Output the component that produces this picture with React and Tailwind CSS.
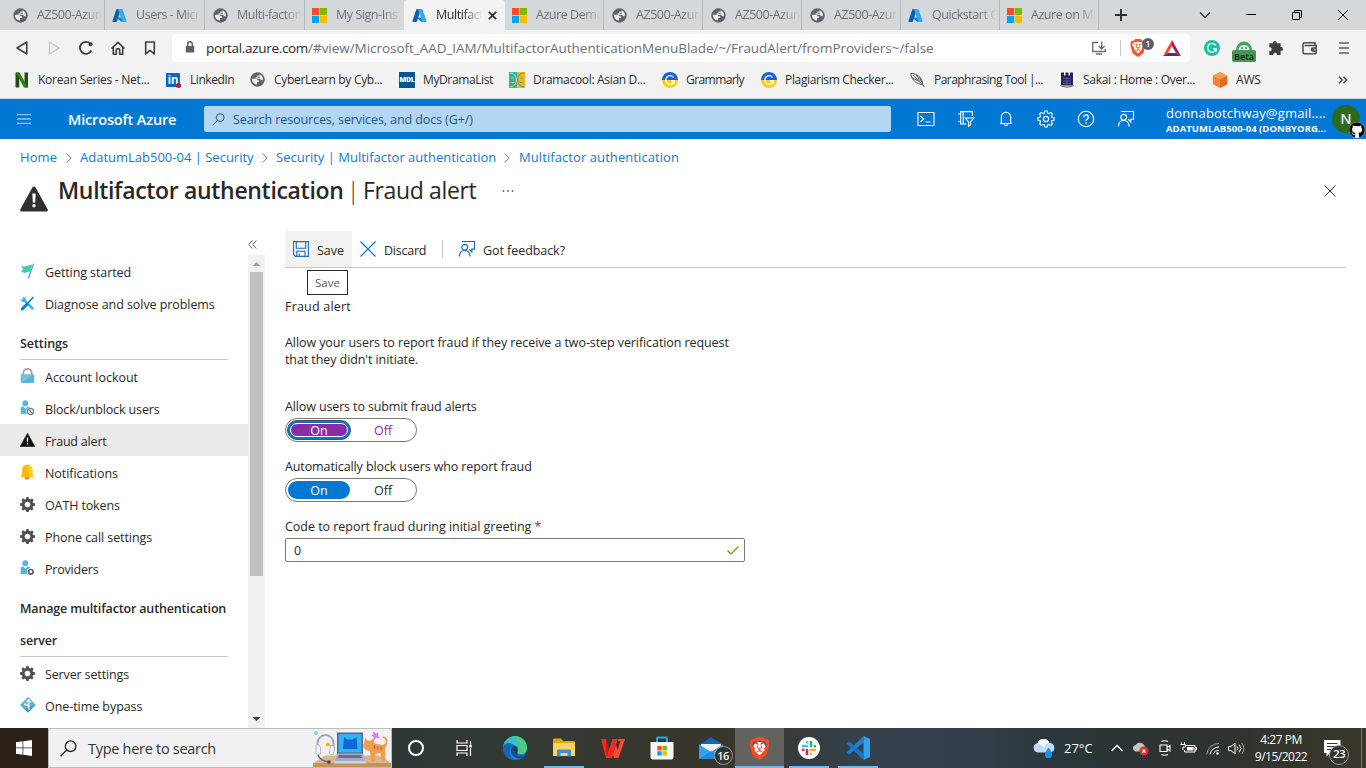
import React from 'react';
import { FaGithub, FaBrave } from 'react-icons/fa6';

/* ---------- shared icons ---------- */

const Globe = () => (
  <svg viewBox="0 0 16 16" className="size-[15px] shrink-0">
    <circle cx="8" cy="8" r="7.7" fill="#5f6368" />
    <path d="M1.900 7.200H6.300q1.700.1 1.700 1.700h1.700v1.800H7.500v2.700q-5.300-.7-5.600-6.200z" fill="#eceeef" />
    <path d="M10.300 2.300v1.500H7.700v1.700H6v1.700h4.500q1 .2 1 1.700h2.200q.6-4.800-3.400-6.600z" fill="#eceeef" />
    <path d="M8 5.500h2.500" stroke="#5f6368" strokeWidth="1.200" />
  </svg>
);

const AzureLogo = () => (
  <svg viewBox="0 0 16 16" className="size-[15px] shrink-0">
    <path d="M5.3 1h4.4L5.2 14.3a.8.8 0 0 1-.7.5H1.2a.7.7 0 0 1-.7-1L4.6 1.5A.8.8 0 0 1 5.3 1z" fill="#0f5ea8" />
    <path d="M11.9 10H5l4.4 4.5 3.8.3z" fill="#0078d4" />
    <path d="M11.3 1.5a.8.8 0 0 0-.7-.5H5.8c.3 0 .6.2.7.5l4.2 12.3a.7.7 0 0 1-.7 1h4.8a.7.7 0 0 0 .7-1z" fill="#36a9ec" />
  </svg>
);

const MsLogo = () => (
  <svg viewBox="0 0 15 15" className="size-[15px] shrink-0">
    <path fill="#f25022" d="M0 0h7.1v7.1H0z" />
    <path fill="#7fba00" d="M7.9 0H15v7.1H7.9z" />
    <path fill="#00a4ef" d="M0 7.9h7.1V15H0z" />
    <path fill="#ffb900" d="M7.9 7.9H15V15H7.9z" />
  </svg>
);

/* the glyph's lion is a cut-out, so a white disc lies under it */
const BraveLion = ({ size, disc, color }) => (
  <span className={'relative flex items-center justify-center ' + size}>
    <span className={'absolute rounded-full bg-white ' + disc} />
    <FaBrave className={'relative ' + size + ' ' + color} />
  </span>
);

/* ---------- browser tabs ---------- */

const tabs = [
  ['globe', 'AZ500-Azure', 'w-[105px] pl-[13px] border-r'],
  ['azure', 'Users - Micro', 'w-[100px] pl-[7px] border-r'],
  ['globe', 'Multi-factor', 'w-[100px] pl-[8px] border-r'],
  ['ms', 'My Sign-Ins', 'w-[99px] pl-[7px]'],
  ['azure', 'Multifacto', 'active'],
  ['ms', 'Azure Demo', 'w-[99px] pl-[7px] border-r'],
  ['globe', 'AZ500-Azure', 'w-[99px] pl-[8px] border-r'],
  ['globe', 'AZ500-Azure', 'w-[99px] pl-[8px] border-r'],
  ['globe', 'AZ500-Azure', 'w-[99px] pl-[8px] border-r'],
  ['azure', 'Quickstart Ce', 'w-[99px] pl-[7px] border-r'],
  ['ms', 'Azure on Mic', 'w-[99px] pl-[7px] border-r'],
];
const tabIcon = { globe: <Globe />, azure: <AzureLogo />, ms: <MsLogo /> };

function TabBar() {
  return (
    <div className="flex h-[30px] shrink-0 bg-[#d4d8db] text-[12.5px] tracking-[-0.45px] text-[#6c7074]">
      {tabs.map(([icon, label, cls], i) =>
        cls === 'active' ? (
          <div key={i} className="flex w-[101px] items-center rounded-t-[4px] bg-[#f2f2f2] pl-[8px] text-[#2b2d30]">
            {tabIcon[icon]}
            <span className="ml-[9px] w-[46px] overflow-hidden whitespace-nowrap pt-px [mask-image:linear-gradient(to_right,black_60%,transparent)]">{label}</span>
            <svg viewBox="0 0 10 10" className="ml-[6px] size-[9px]"><path d="M1 1l8 8M9 1L1 9" stroke="#2b2d30" strokeWidth="1.8" /></svg>
          </div>
        ) : (
          <div key={i} className={'flex items-center border-[#b5b9bc] ' + cls}>
            {tabIcon[icon]}
            <span className="ml-[9px] w-[65px] overflow-hidden whitespace-nowrap pt-px [mask-image:linear-gradient(to_right,black_72%,transparent)]">{label}</span>
          </div>
        )
      )}
      <div className="flex flex-1 items-center">
        <svg viewBox="0 0 12 12" className="ml-[16px] size-[12px]"><path d="M6 0v12M0 6h12" stroke="#2b2d30" strokeWidth="1.9" /></svg>
        <div className="ml-auto flex items-center text-black">
          <span className="flex w-[46px] justify-center"><svg viewBox="0 0 12 12" className="size-[12px]"><path d="M1 3.500L6 8.500l5-5" fill="none" stroke="#222" strokeWidth="1.100" /></svg></span>
          <span className="flex w-[46px] justify-center"><svg viewBox="0 0 12 12" className="size-[12px]"><path d="M1 5.500h10" stroke="#000" /></svg></span>
          <span className="flex w-[46px] justify-center"><svg viewBox="0 0 12 12" className="size-[12px]"><path d="M1.500 3.500h7v7h-7zM3.500 3.500v-2h7v7h-2" fill="none" stroke="#000" /></svg></span>
          <span className="flex w-[46px] justify-center"><svg viewBox="0 0 12 12" className="size-[12px]"><path d="M1 1l10 10M11 1L1 11" stroke="#000" /></svg></span>
        </div>
      </div>
    </div>
  );
}

/* ---------- address bar ---------- */

const NavIcon = ({ children }) => (
  <span className="flex w-[32px] justify-center">
    <svg viewBox="0 0 16 16" className="size-[16px]" fill="none" stroke="#3b3e42" strokeWidth="1.6">{children}</svg>
  </span>
);

function AddressBar() {
  return (
    <div className="flex h-[36px] shrink-0 items-center bg-[#f2f2f2] pl-[6px]">
      <NavIcon><path d="M12.800 2v12L3 8z" strokeLinejoin="round" /></NavIcon>
      <NavIcon><path d="M3.500 2v12L13 8z" strokeLinejoin="round" stroke="#c3c5c7" strokeWidth="1.3" /></NavIcon>
      <NavIcon><path d="M13.300 10.500A6 6 0 1 1 12.600 4" strokeWidth="1.800" /><circle cx="12.600" cy="4.300" r="2" fill="#3b3e42" stroke="none" /></NavIcon>
      <NavIcon><path d="M1.500 8.500L8 2.300l6.500 6.200M3.300 7.500v6.700h3V10.300a1.700 1.700 0 0 1 3.400 0v3.900h3V7.500" strokeLinejoin="round" /></NavIcon>
      <NavIcon><path d="M3.700 2h8.600v12L8 10.300 3.700 14z" strokeLinejoin="round" /></NavIcon>
      <div className="ml-[6px] flex h-[28px] w-[1018px] items-center rounded-[4px] bg-white text-[13.5px] text-[#6b6f73]">
        <svg viewBox="0 0 10 12" className="ml-[13px] mb-[2px] h-[12px] w-[10px]">
          <path d="M.8 5h8.400v6.500H.800z" fill="#5a5e62" />
          <path d="M2.700 5.500V3a2.300 2.300 0 0 1 4.600 0v2.500" fill="none" stroke="#5a5e62" strokeWidth="1.500" />
        </svg>
        <span className="ml-[11px] tracking-[-0.31px] text-[#27292c]">portal.azure.com</span>
        <span className="tracking-[-0.04px]">/#view/Microsoft_AAD_IAM/MultifactorAuthenticationMenuBlade/~/FraudAlert/fromProviders~/false</span>
        <svg viewBox="0 0 16 16" className="ml-auto mr-[3px] size-[16px]" fill="none" stroke="#6a6e72" strokeWidth="1.400">
          <path d="M7 2.500H1.700v9h12.600V9M5 14h6M10.700 1.500v7M7.800 6l2.900 2.900L13.600 6" />
        </svg>
        <span className="ml-[10px] h-[16px] w-px bg-[#c8cacc]" />
        <span className="relative ml-[8px] mr-px flex size-[18px] items-center justify-center">
          <BraveLion size="size-[18px]" disc="size-[10px]" color="text-[#fb542b]" />
          <span className="absolute left-[13px] -top-[1px] flex size-[12px] items-center justify-center rounded-full bg-[#5b6170] text-[8.5px] font-semibold text-white">1</span>
        </span>
        <svg viewBox="0 0 18 16" className="ml-[15px] mr-[9px] h-[16px] w-[18px]">
          <path d="M9 0L0 16l5-3L9 6z" fill="#ff4724" /><path d="M0 16h18l-5-3H5z" fill="#5a2a8a" /><path d="M18 16L9 0v6l4 7z" fill="#9e1f63" />
        </svg>
      </div>
      <svg viewBox="0 0 16 16" className="ml-[14px] size-[16px]">
        <circle cx="8" cy="8" r="8" fill="#15c39a" />
        <path d="M11.800 5.500A4.400 4.400 0 1 0 12.300 9H8.800M12.300 8.200v3.300" fill="none" stroke="#fff" strokeWidth="1.400" />
      </svg>
      <span className="ml-[12px] flex w-[24px] flex-col items-center pt-[6px]">
        <svg viewBox="0 0 16 10" className="h-[10px] w-[16px]">
          <path d="M0 10a8 8.500 0 0 1 16 0z" fill="#46a35c" /><path d="M2.500 10a5.500 5 0 0 1 11 0z" fill="#e6f5e9" /><circle cx="6" cy="8" r=".9" fill="#2d7a40" /><circle cx="10" cy="8" r=".9" fill="#2d7a40" />
        </svg>
        <span className="flex h-[12px] w-[24px] items-center justify-center rounded-[2px] bg-[#479457] text-[9px] font-semibold leading-none text-[#10240f]">Beta</span>
      </span>
      <svg viewBox="0 0 16 16" className="ml-[12px] size-[16px]">
        <path d="M6.800 1a1.900 1.900 0 0 1 1.900 2.200h3.900v3.900a1.900 1.900 0 1 1 0 3.700v4.200H9a1.900 1.900 0 1 0-3.700 0H1.300v-4a1.900 1.900 0 1 0 0-3.700V3.200H5A1.900 1.900 0 0 1 6.800 1z" fill="#3b3e42" />
      </svg>
      <svg viewBox="0 0 16 16" className="ml-[18px] size-[16px]" fill="none" stroke="#4b4e52" strokeWidth="1.500">
        <path d="M13 5V2.700H2.500A1.500 1.500 0 0 0 1 4.200v8a1.500 1.500 0 0 0 1.500 1.500h10.700A1 1 0 0 0 14.200 12.700V5.500H2.500" /><path d="M15 8h-4a1.600 1.600 0 0 0 0 3.200h4" /><circle cx="11.300" cy="9.600" r=".5" fill="#4b4e52" />
      </svg>
      <svg viewBox="0 0 12 12" className="ml-[20px] size-[12px]"><path d="M1 1h10M1 6h10M1 11h10" stroke="#5d6064" strokeWidth="1.600" /></svg>
    </div>
  );
}

/* ---------- bookmarks ---------- */

const GrammarlyBadge = () => (
  <svg viewBox="0 0 16 16" className="size-[16px] shrink-0">
    <path d="M0 8a8 8 0 0 1 16 0z" fill="#1664d0" /><path d="M0 8a8 8 0 0 0 16 0z" fill="#fbcf14" />
    <path d="M11.500 5.300A4.300 4.300 0 1 0 12.300 9H9M12.300 8.400v3" fill="none" stroke="#fff" strokeWidth="1.300" />
  </svg>
);

const bookmarks = [
  ['Korean Series - Net...', 'w-[152px]', 'tracking-[-0.24px]',
    <svg viewBox="0 0 16 16" className="size-[16px]"><path d="M1.500.5h3.700v15H1.500zM10.500.5h3.500v15h-3.500z" fill="#1f4d12" /><path d="M1.500.5h4L14 15.500h-4z" fill="#2f7d1b" /></svg>],
  ['LinkedIn', 'w-[84px]', 'tracking-[-0.45px]',
    <span className="relative flex size-[14px] items-center justify-center rounded-[1px] bg-[#0a66c2] font-['Liberation_Sans'] text-[12px] font-bold leading-none tracking-normal text-white">in<i className="absolute -right-[1px] -bottom-[1px] size-[5px] rounded-full bg-[#d11124]" /></span>],
  ['CyberLearn by Cyb...', 'w-[149px]', 'tracking-[-0.3px]', <Globe />],
  ['MyDramaList', 'w-[110px]', 'tracking-[-0.38px]',
    <span className="flex size-[16px] items-center justify-center bg-[#00568c] text-[7px] font-extrabold leading-none tracking-[-0.3px] text-white">MDL</span>],
  ['Dramacool: Asian D...', 'w-[153px]', 'tracking-[-0.32px]',
    <svg viewBox="0 0 16 16" className="size-[16px]"><path fill="#2fb5a8" d="M0 0h8v16H0z" /><path fill="#f5b324" d="M8 0h8v16H8z" /><path d="M1 1q6 0 6.500 7-.5 6.500-6.500 7M2.500 6h2M2.500 10.500q2 .5 3-.5" fill="none" stroke="#f5c95a" /><path d="M15 1q-6 0-6.500 7 .5 6.500 6.500 7M13.500 6h-2M13.500 10.500q-2 .5-3-.5" fill="none" stroke="#2fa598" /></svg>],
  ['Grammarly', 'w-[99px]', 'tracking-[-0.57px]', <GrammarlyBadge />],
  ['Plagiarism Checker...', 'w-[149px]', 'tracking-[-0.34px]', <GrammarlyBadge />],
  ['Paraphrasing Tool |...', 'w-[149px]', 'tracking-[-0.54px]',
    <svg viewBox="0 0 16 16" className="size-[16px]" fill="none" stroke="#55585b"><path d="M.8 1.500c6-.5 11.500 4 12 11C7 12.500 1.500 8 .8 1.500zM3 3l11.500 12M6.500 3l3 5.500M9.500 5l2 5M2.500 6l6 3" /></svg>],
  ['Sakai : Home : Over...', 'w-[153px]', 'tracking-[-0.28px]',
    <svg viewBox="0 0 16 16" className="size-[16px]"><path d="M0 0h16v16H0z" fill="#fbfbfb" /><path d="M2 .5h3v3h1.500v-3h3v3H11v-3h3v13H2z" fill="#23235f" /><path d="M4 6.500h8M4 9h8M4 11.500h8M8 5v8" stroke="#6a6ba0" strokeWidth=".7" /><path d="M1 13.500q7 3 14 0" fill="none" stroke="#9c8457" strokeWidth="1.300" /></svg>],
  ['AWS', 'w-[60px]', 'tracking-[-0.2px]',
    <svg viewBox="0 0 16 16" className="size-[16px]"><path d="M8 0l7.200 3.800v8.400L8 16 .800 12.200V3.800z" fill="#f58536" /><path d="M8 7.600l7.200-3.800v8.400L8 16z" fill="#ea6a20" /><path d="M8 0l7.200 3.800L8 7.600.800 3.800z" fill="#fa9c50" /></svg>],
];

function Bookmarks() {
  return (
    <div className="flex h-[33px] shrink-0 items-center border-b border-[#cfd2d4] bg-[#f2f2f2] pb-[5px] pl-[14px] text-[12px] text-[#2c2e31]">
      {bookmarks.map(([label, w, tr, icon]) => (
        <div key={label} className={'flex shrink-0 items-center ' + w}>
          <span className="flex w-[24px] shrink-0">{icon}</span>
          <span className={'whitespace-nowrap ' + tr}>{label}</span>
        </div>
      ))}
      <svg viewBox="0 0 10 8" className="ml-auto mr-[18px] h-[8px] w-[10px]" fill="none" stroke="#3b3e42" strokeWidth="1.500"><path d="M1 .8L4.200 4 1 7.200M5.500.8L8.700 4 5.500 7.200" /></svg>
    </div>
  );
}

/* ---------- Azure header ---------- */

const HeaderIcon = ({ children }) => (
  <span className="flex w-[40px] justify-center">
    <svg viewBox="0 0 18 18" className="size-[18px]" fill="none" stroke="#fff" strokeWidth="1.100">{children}</svg>
  </span>
);

const FeedbackPath = () => (
  <path d="M4.500 2V1.500h12v7.700h-2.700v2.800l-2.600-2.800M9.600 7.300A2.900 2.900 0 1 1 3.800 7.300a2.900 2.900 0 0 1 5.800 0zM1.500 16.500c0-3.600 2-6 5.200-6s5.300 2.400 5.300 6" />
);

function AzureHeader() {
  return (
    <header className="flex h-[40px] shrink-0 items-center bg-[#0078d4] text-white">
      <svg viewBox="0 0 14 10" className="ml-[17px] h-[10px] w-[14px]"><path d="M0 .7h14M0 5h14M0 9.300h14" stroke="#8fc3ee" strokeWidth="1.300" /></svg>
      <span className="ml-[37px] w-[136px] pt-px text-[14.5px] font-semibold tracking-[-0.16px] whitespace-nowrap">Microsoft Azure</span>
      <div className="flex h-[26px] w-[687px] items-center rounded-[2px] bg-[#b3d7f2] text-[12.5px] tracking-[-0.09px] text-[#1a5790]">
        <svg viewBox="0 0 13 13" className="ml-[8px] size-[13px]" fill="none" stroke="#1f5c99"><circle cx="8.200" cy="4.600" r="3.900" /><path d="M5.300 7.500L.6 12.400" /></svg>
        <span className="ml-[8px] pt-[2px]">Search resources, services, and docs (G+/)</span>
      </div>
      <div className="ml-[15px] flex">
        <HeaderIcon><path d="M1 2.500h16v13H1zM3.500 6l3.200 3-3.200 3M8.500 12h5" /></HeaderIcon>
        <HeaderIcon><path d="M9.500 14H3.700V1.600h11.600V6M3.700 4H1.200M3.700 11.500H1.200M6.200 1.600V14M8.300 8h8.500l-3.300 4v3l-2 1.500V12z" /></HeaderIcon>
        <HeaderIcon><path d="M3 13.500h12M4.300 13.500V7a4.700 4.700 0 0 1 9.400 0v6.500M7.200 13.800a1.800 1.800 0 0 0 3.600 0" /></HeaderIcon>
        <HeaderIcon>
          <path d="M7.800 1h2.400l.4 2 1.400.6 1.700-1.200 1.800 1.800L14.400 6l.6 1.300 2 .4v2.500l-2 .4-.6 1.400 1.100 1.700-1.800 1.800-1.700-1.100-1.400.6-.4 2H7.800l-.4-2-1.400-.6-1.700 1.100-1.800-1.800L3.600 12 3 10.600l-2-.4V7.700l2-.4L3.600 6 2.500 4.200l1.800-1.800L6 3.600 7.400 3z" />
          <circle cx="9" cy="9" r="2.600" />
        </HeaderIcon>
        <HeaderIcon><circle cx="9" cy="9" r="7.700" /><path d="M6.700 7.200a2.300 2.300 0 1 1 3.500 1.900c-.9.600-1.200 1-1.200 2M9 12.200v1.500" strokeWidth="1.400" /></HeaderIcon>
        <HeaderIcon><FeedbackPath /></HeaderIcon>
      </div>
      <div className="ml-[20px] flex w-[166px] flex-col pt-[2px] whitespace-nowrap">
        <span className="text-[13px] leading-[16px] tracking-[0.19px]">donnabotchway@gmail....</span>
        <span className="text-[9.5px] font-bold leading-[15px] tracking-[0.02px]">ADATUMLAB500-04 (DONBYORG...</span>
      </div>
      <span className="relative flex size-[28px] items-center justify-center rounded-full bg-[#2c6a24] text-[14.5px] font-semibold text-[#e6f0e4]">
        N
        <span className="absolute left-[17px] top-[17px] flex size-[16px] items-center justify-center rounded-full bg-white text-black"><FaGithub className="size-[16px]" /></span>
      </span>
    </header>
  );
}

/* ---------- page heading ---------- */

const Crumb = () => <svg viewBox="0 0 6 10" className="h-[10px] w-[6px]" fill="none" stroke="#7a7876"><path d="M.7.5L5.200 5 .7 9.500" /></svg>;

function Heading() {
  return (
    <div className="shrink-0">
      <nav className="flex h-[36px] items-center pt-[2px] pl-[20px] text-[13px] whitespace-nowrap text-[#0f7bd4]">
        <span className="w-[46px] tracking-[0.1px]">Home</span><Crumb />
        <span className="ml-[8px] w-[182px]">AdatumLab500-04 | Security</span><Crumb />
        <span className="ml-[8px] w-[228px]">Security | Multifactor authentication</span><Crumb />
        <span className="ml-[9px] tracking-[0.08px]">Multifactor authentication</span>
      </nav>
      <div className="flex h-[56px] pl-[20px] text-[#292827]">
        <svg viewBox="0 0 28 26" className="mt-[11px] h-[26px] w-[28px]">
          <path d="M14 0.500q1 0 1.600 1L27.500 23q1 2.600-1.500 2.600H2Q-.5 25.600.5 23L12.400 1.500q.6-1 1.600-1z" fill="#32302f" />
          <path d="M12.300 7.500h3.400l-.5 9h-2.400z" fill="#fff" /><circle cx="14" cy="19.800" r="1.700" fill="#fff" />
        </svg>
        <h1 className="ml-[10px] flex text-[23px] leading-[31px] whitespace-nowrap">
          <span className="w-[289px] font-semibold tracking-[-0.32px]">Multifactor authentication</span>
          <span className="w-[16px] font-light">|</span>
          <span className="tracking-[-0.36px]">Fraud alert</span>
        </h1>
        <svg viewBox="0 0 12 2" className="ml-[26px] mt-[15px] h-[2px] w-[12px]" fill="#605e5c"><circle cx="1.500" cy="1" r=".9" /><circle cx="6" cy="1" r=".9" /><circle cx="10.500" cy="1" r=".9" /></svg>
        <svg viewBox="0 0 12 12" className="ml-auto mr-[30px] mt-[10px] size-[12px]"><path d="M.5.5l11 11M11.500.5l-11 11" stroke="#323130" /></svg>
      </div>
    </div>
  );
}

/* ---------- side menu ---------- */

const Gear = () => (
  <svg viewBox="0 0 16 16" className="size-[15px]">
    <path fillRule="evenodd" fill="#4f4f4f" d="M6.800 0h2.400l.4 2 1.400.6 1.700-1.200 1.800 1.800L13.400 5l.6 1.300 2 .4v2.500l-2 .4-.6 1.400 1.100 1.700-1.800 1.800-1.700-1.100-1.400.6-.4 2H6.800l-.4-2-1.400-.6-1.700 1.100-1.800-1.800L2.600 11 2 9.600l-2-.4V6.700l2-.4L2.600 5 1.500 3.200l1.800-1.800L5 2.600 6.400 2zM8 5a3 3 0 1 0 0 6 3 3 0 0 0 0-6z" />
  </svg>
);
const Person = ({ children }) => (
  <svg viewBox="0 0 15 16" className="h-[16px] w-[15px]">
    <circle cx="5.300" cy="3.200" r="2.900" fill="#59b4d9" /><path d="M.7 14V8.600a2 2 0 0 1 2-2h1L5.500 9l1.800-2.400h1a2 2 0 0 1 2 2V14z" fill="#59b4d9" />
    {children}
  </svg>
);
const icons = {
  flag: <svg viewBox="0 0 15 16" className="h-[16px] w-[15px]"><path d="M13.300.5l.8.300L9 15.500l-1.200-.3z" fill="#2f8fdc" /><path d="M1 2.500q3 1.500 5.500.5t6-1.500L10.300 9q-2-.5-4 .5T2.500 9L.7 9.500 3 6z" fill="#3cd0ae" /></svg>,
  tools: <svg viewBox="0 0 15 15" className="size-[15px]"><path d="M3.500 3.500l9 9" stroke="#36b8e6" strokeWidth="2.500" strokeLinecap="round" /><path d="M2.800.8l.6 2.200-.8.800L.6 3.300a3.200 3.200 0 0 0 4.800 2.500A3.200 3.200 0 0 0 2.800.8z" fill="#36b8e6" /><path d="M13.500 1L8 7" stroke="#0f7bc4" strokeWidth="1.500" /><path d="M7 8.200l-4.800 4.800" stroke="#1479bd" strokeWidth="3" strokeLinecap="round" /></svg>,
  lock: <svg viewBox="0 0 15 16" className="h-[16px] w-[15px]"><path d="M3.300 8V5a4.200 4.200 0 0 1 8.400 0v3" fill="none" stroke="#a0a1a2" strokeWidth="1.800" /><path d="M.8 6.500h13.400V14q0 1-1 1H1.800q-1 0-1-1z" fill="#59b4d9" /><path d="M.8 6.500h12L1.500 15q-.7-.2-.7-1z" fill="#74c0e0" /></svg>,
  block: <Person><circle cx="10.500" cy="11.500" r="4.300" fill="#fff" /><circle cx="10.500" cy="11.500" r="3.200" fill="#e6e6e6" stroke="#7a7a7a" strokeWidth="1.200" /><path d="M8.300 9.300l4.400 4.400" stroke="#7a7a7a" strokeWidth="1.200" /></Person>,
  alert: <svg viewBox="0 0 15 14" className="h-[14px] w-[15px]"><path d="M7.500.3L14.800 13.500H.2z" fill="#111" stroke="#111" strokeWidth=".6" strokeLinejoin="round" /><path d="M6.800 4.500h1.400l-.2 4.500h-1zM6.900 10.200h1.200v1.300H6.900z" fill="#fff" /></svg>,
  bell: <svg viewBox="0 0 15 16" className="h-[16px] w-[15px]"><circle cx="7" cy="13.200" r="2.500" fill="#f78d1e" /><path d="M2 11V5.800a5.200 5.200 0 0 1 10.400 0V11l1.400 1.300v1H.7v-1z" fill="#fdb813" /><path d="M7.200.6a5.200 5.200 0 0 1 5.200 5.200V11l1.400 1.300v1H10z" fill="#ffd01c" /></svg>,
  gear: <Gear />,
  provider: <Person><circle cx="10.800" cy="11.800" r="3.900" fill="#fff" /><circle cx="10.800" cy="11.800" r="2.300" fill="#fff" stroke="#5b5b5b" strokeWidth="1.700" /></Person>,
  bypass: <svg viewBox="0 0 16 16" className="size-[16px]"><path d="M8 .3L15.700 8 8 15.700.3 8z" fill="#3999c6" /><path d="M8 .3L15.700 8 8 11 4 12 .3 8z" fill="#5fb0d6" /><path d="M8.700 12.500V5M8.700 8.700Q5 8 4.700 6.500M6.800 5.200L8.700 3l2 2.200" fill="none" stroke="#fff" strokeWidth="1.500" /></svg>,
};

const MenuItem = ({ icon, label, tr, active }) => (
  <li className={'flex h-[32px] items-center pl-[20px] ' + (active ? 'bg-[#edebe9]' : '')}>
    <span className="flex w-[25px]">{icons[icon]}</span>
    <span className={'pt-[3px] whitespace-nowrap ' + tr}>{label}</span>
  </li>
);

function SideMenu() {
  return (
    <aside className="flex w-[265px] shrink-0 flex-col">
      <div className="flex h-[24px] items-center justify-end pt-[2px] pr-[8px]">
        <svg viewBox="0 0 9 9" className="size-[9px]" fill="none" stroke="#605e5c"><path d="M4.300.5L.7 4.500l3.600 4M8.300.5L4.700 4.500l3.600 4" /></svg>
      </div>
      <div className="flex flex-1">
        <div className="w-[248px] text-[12.5px] leading-[19px] text-[#292827]">
          <ul>
            <MenuItem icon="flag" label="Getting started" tr="tracking-[-0.1px]" />
            <MenuItem icon="tools" label="Diagnose and solve problems" tr="tracking-[-0.07px]" />
          </ul>
          <h2 className="mt-[8px] mr-[20px] ml-[20px] h-[33px] border-b border-[#c8c6c4] pt-px font-semibold leading-[32px] tracking-[-0.05px]">Settings</h2>
          <ul>
            <MenuItem icon="lock" label="Account lockout" tr="tracking-[-0.02px]" />
            <MenuItem icon="block" label="Block/unblock users" tr="tracking-[-0.13px]" />
            <MenuItem icon="alert" label="Fraud alert" tr="tracking-[-0.2px]" active />
            <MenuItem icon="bell" label="Notifications" tr="tracking-[-0.05px]" />
            <MenuItem icon="gear" label="OATH tokens" tr="tracking-[-0.12px]" />
            <MenuItem icon="gear" label="Phone call settings" tr="tracking-[-0.08px]" />
            <MenuItem icon="provider" label="Providers" tr="tracking-[-0.2px]" />
          </ul>
          <h2 className="mt-[8px] mr-[20px] ml-[20px] h-[65px] border-b border-[#c8c6c4] pt-px font-semibold leading-[32px] tracking-[-0.16px]">Manage multifactor authentication server</h2>
          <ul>
            <MenuItem icon="gear" label="Server settings" tr="tracking-[-0.14px]" />
            <MenuItem icon="bypass" label="One-time bypass" tr="tracking-[-0.06px]" />
          </ul>
        </div>
        <div className="flex w-[17px] flex-col items-center bg-[#f1f1f1]">
          <svg viewBox="0 0 17 17" className="size-[17px]"><path d="M4.500 11L8.500 7l4 4z" fill="#a3a3a3" /></svg>
          <div className="h-[304px] w-[13px] bg-[#c1c1c1]" />
          <svg viewBox="0 0 17 17" className="mt-auto size-[17px]"><path d="M4.500 6L8.500 10l4-4z" fill="#404040" /></svg>
        </div>
      </div>
    </aside>
  );
}

/* ---------- blade content ---------- */

function CommandBar() {
  return (
    <div className="flex h-[37px] border-b border-[#c8c6c4]">
      <div className="relative flex w-[67px] items-center bg-[#f3f2f1] pl-[8px]">
        <svg viewBox="0 0 16 16" className="size-[16px]" fill="none" stroke="#1a6fc4" strokeWidth="1.100">
          <path d="M.6.600h14.800v14.800H2.500L.6 13.500zM3.300.6v6.700h9.400V.6M3.700 15.400v-5.200h8.300v5.200M6.300 15.400v-3" />
        </svg>
        <span className="ml-[8px] mt-[2px]">Save</span>
        <span className="absolute left-[22px] top-[39px] flex h-[25px] w-[41px] items-center justify-center border border-[#2b2b2b] bg-white text-[11.5px] text-[#575757]">Save</span>
      </div>
      <div className="flex w-[90px] items-center pl-[8px]">
        <svg viewBox="0 0 16 16" className="size-[16px]"><path d="M.5.500l15 15M15.500.5l-15 15" stroke="#0078d4" strokeWidth="1.200" /></svg>
        <span className="ml-[8px] mt-[2px] tracking-[-0.24px]">Discard</span>
      </div>
      <span className="mt-[9px] h-[18px] w-px bg-[#c8c6c4]" />
      <div className="flex items-center pl-[15px]">
        <svg viewBox="0 0 18 18" className="size-[18px]" fill="none" stroke="#0f6fc6" strokeWidth="1.200"><FeedbackPath /></svg>
        <span className="ml-[7px] mt-[2px] tracking-[-0.06px]">Got feedback?</span>
      </div>
    </div>
  );
}

function Blade() {
  return (
    <main className="ml-[20px] w-[1061px] text-[12.5px] leading-[17px] whitespace-nowrap text-[#292827]">
      <CommandBar />
      <h3 className="mt-[30px] tracking-[0.2px]">Fraud alert</h3>
      <p className="mt-[19px] tracking-[-0.085px]">
        Allow your users to report fraud if they receive a two-step verification request<br />that they didn&apos;t initiate.
      </p>
      <div className="mt-[30px] tracking-[-0.13px]">Allow users to submit fraud alerts</div>
      <div className="mt-[3px] flex h-[24px] w-[132px] items-center rounded-full border border-[#7a7876] pl-px">
        <span className="flex h-[20px] w-[64px] rounded-full border border-[#505050] bg-[#0078d4] p-[2px]">
          <span className="flex flex-1 items-center justify-center rounded-full border border-white bg-[#8a2da5] text-white">On</span>
        </span>
        <span className="w-[64px] text-center text-[#8a2da5]">Off</span>
      </div>
      <div className="mt-[16px] tracking-[-0.11px]">Automatically block users who report fraud</div>
      <div className="mt-[3px] flex h-[24px] w-[132px] items-center rounded-full border border-[#7a7876] pl-[2px]">
        <span className="flex h-[18px] w-[62px] items-center justify-center rounded-full bg-[#0078d4] text-white">On</span>
        <span className="w-[66px] text-center">Off</span>
      </div>
      <div className="mt-[16px] tracking-[-0.03px]">Code to report fraud during initial greeting <span className="text-[#a4262c]">*</span></div>
      <div className="mt-[3px] flex h-[24px] w-[460px] items-center justify-between rounded-[2px] border border-[#7a7876] pr-[5px] pl-[8px]">
        <span>0</span>
        <svg viewBox="0 0 12 9" className="h-[9px] w-[12px]" fill="none" stroke="#57a300" strokeWidth="1.200"><path d="M.5 4.500l3.500 3.500L11.500.5" /></svg>
      </div>
    </main>
  );
}

/* ---------- taskbar ---------- */

const Cell = ({ children }) => <span className="flex h-full w-[49px] items-center justify-center">{children}</span>;
const Running = ({ children, cls = '', bar = 'w-[40px]' }) => (
  <span className={'flex h-full w-[49px] flex-col items-center ' + cls}>
    <span className="flex h-[38px] items-center pt-[2px]">{children}</span>
    <span className={'h-[2px] bg-[#76b9ed] ' + bar} />
  </span>
);

const SearchArt = () => (
  <svg viewBox="0 0 78 38" className="h-[38px] w-[78px]">
    <path d="M12 26.500h56l10 8H0z" fill="#dcb58a" /><path d="M0 34h78v4H0z" fill="#c1935f" />
    <circle cx="3" cy="4" r="2" fill="#6fd9ee" />
    <path d="M4.500 20V14a8 8 0 0 1 16 0v6" fill="none" stroke="#a3a7ba" strokeWidth="2" />
    <path d="M3 16q4-1 4.500 3v6q-3 3-4.500-1zM17.500 16q4 0 4 3.500l-1 6q-3 1-4-1z" fill="#f3f3f8" stroke="#9c9fb2" strokeWidth=".7" />
    <path d="M5 26q2 6 11 7" fill="none" stroke="#686b80" strokeWidth="1.500" /><circle cx="16" cy="33" r="1.800" fill="#444657" />
    <circle cx="14.800" cy="15.500" r="2" fill="#f9ae18" />
    <path d="M24 3.500h26v22H24z" fill="#5c648b" /><path d="M25.500 5h23v18.500h-23z" fill="#35b2f2" />
    <path d="M31 8l3.500 2.500h5L43.500 8l1 12H30z" fill="#0c68d6" />
    <path d="M24 24.500h26l2 8H22z" fill="#a7abc1" /><path d="M26 26h22l1 3H25z" fill="#676c89" /><path d="M21.500 32h31v2.500h-31z" fill="#d3d5e2" />
    <path d="M60 2.500l3 2 2.500-1-.5 3 1.500 2.500-3-.3-2.500 2-.5-3-2.500-1.500 2.500-1z" fill="#e27cf0" />
    <path d="M52 9l2.500 2.500h3L61 9.500l.500 5 8 1.500q4-1 3-5-.5-2-3-2l.5-1.500q4.500.2 4.500 4.500 0 4-2.500 7.500l.500 12h-3.500L67.500 24l-5 1-.5 7h-4L57 22q-4 0-7-4z" fill="#ef9d50" />
    <path d="M61 16l1 4M64.500 17l.5 4M68 17.500v4" stroke="#c96d2b" strokeWidth="1.200" />
  </svg>
);

function Taskbar() {
  return (
    <footer className="flex h-[40px] shrink-0 items-center bg-[linear-gradient(90deg,#2c2019_0px,#2c2019_48px,#2c3736_392px,#343a33_540px,#38342a_710px,#36414b_860px,#33404c_960px,#2a363a_1060px,#2d3330_1200px,#3b362a_1366px)] text-white">
      <span className="flex w-[48px] justify-center">
        <svg viewBox="0 0 16 16" className="size-[16px]" fill="#fff"><path d="M0 2.200l6.600-.9v6.300H0zM7.300 1.200L16 0v7.600H7.300zM0 8.300h6.600v6.400L0 13.800zM7.300 8.300H16V16l-8.700-1.200z" /></svg>
      </span>
      <div className="flex h-full w-[344px] items-center border border-[#bdbdbd] bg-[#f1f1f1] text-[14.5px] tracking-[-0.29px] whitespace-nowrap text-[#333]">
        <svg viewBox="0 0 17 17" className="ml-[11px] size-[17px]" fill="none" stroke="#222" strokeWidth="1.300"><circle cx="10.600" cy="6.200" r="5.300" /><path d="M6.700 10L.6 16.200" /></svg>
        <span className="ml-[11px] flex-1 pt-[2px]">Type here to search</span>
        <SearchArt />
      </div>
      <span className="flex w-[48px] justify-center"><span className="size-[16px] rounded-full border-2 border-white" /></span>
      <span className="mr-[2px] flex w-[48px] justify-center">
        <svg viewBox="0 0 17 16" className="h-[16px] w-[17px]" fill="none" stroke="#fff" strokeWidth="1.200"><path d="M1 0v3h10V0M1 5.500h10v5H1zM1 16v-3h10v3M14.500 1v3.500M14.500 8v8" /><path d="M13.300 4.800h2.400v2.700h-2.400z" fill="#fff" stroke="none" /></svg>
      </span>
      <Cell>
        <svg viewBox="0 0 24 24" className="size-[24px]">
          <circle cx="12" cy="12" r="12" fill="#1687d0" />
          <path d="M.2 10A12 12 0 0 1 24 12c0 4-3 6-6.500 6-3 0-4-1.500-3-3 1.500-2 .5-5.500-3.500-5.500C7 9.500 2 9 .2 10z" fill="#36c0c4" />
          <path d="M12 0a12 12 0 0 1 12 12c0 4-3 6-6.500 6-3 0-4-1.500-3-3C17 11 18 4 9 .4z" fill="#54d268" opacity=".75" />
          <path d="M11 9.500c-4 1.500-5 9 2 12.500 3.500 1.500 7 0 9-3-6 3-12-1-8-4.500 1-2-.5-4.500-3-5z" fill="#1150a0" /><path d="M11.500 10.500c-1.500 2-1 6 2.500 8 3 1.500 6.500 1 8.500-.500-1 .800-3 1.200-5 1-3 0-4-1.500-3-3.500.5-2-.5-4.500-3-5z" fill="#303631" /><path d="M.2 10c2-3.500 8-4 10.800-.5C5 11 5 20 12 24A12 12 0 0 1 .2 10z" fill="#1566b5" />
        </svg>
      </Cell>
      <Running>
        <svg viewBox="0 0 22 19" className="mb-px h-[19px] w-[22px]"><path d="M0 1.500Q0 .5 1 .5h7l2 2.500h11q1 0 1 1V18H0z" fill="#e5a50f" /><path d="M0 5h22v12q0 1-1 1H1q-1 0-1-1z" fill="#fcd462" /><path d="M4 18.500v-6q0-1 1-1h12q1 0 1 1v6h-3.500V15h-7v3.500z" fill="#3f8fd6" /></svg>
      </Running>
      <Cell>
        <svg viewBox="0 0 24 19" className="h-[19px] w-[24px]"><path d="M0 0h5l3 10.500L11.500 0H17L10.500 19H5z" fill="#f42a1e" /><path d="M5 0l3 10.500L5.800 17z" fill="#c41210" /><path d="M10.500 19L15 6l1.700 5L20 0h4l-6.500 19H13l-.8-3z" fill="#ff4a35" /><path d="M17.500 0H24l-.6 2h-6.600z" fill="#ff4a35" /></svg>
      </Cell>
      <Cell>
        <svg viewBox="0 0 24 24" className="size-[24px]"><path d="M7 7V2.500Q7 1.500 8 1.500h8q1 0 1 1V7" fill="none" stroke="#2ba5e8" strokeWidth="2" /><path d="M.5 6h23v15.500q0 2-2 2h-19q-2 0-2-2z" fill="#f7f7f7" /><path d="M7.300 10h4.400v4.400H7.300z" fill="#f25022" /><path d="M12.500 10h4.400v4.400h-4.400z" fill="#7fba00" /><path d="M7.300 15.200h4.400v4.400H7.300z" fill="#00a4ef" /><path d="M12.500 15.200h4.400v4.400h-4.400z" fill="#ffb900" /></svg>
      </Cell>
      <Cell>
        <span className="relative flex">
          <svg viewBox="0 0 24 22" className="h-[22px] w-[24px]"><path d="M0 7.500L12 0l12 7.500V22H0z" fill="#1066b5" /><path d="M2 7h20v9H2z" fill="#eceff3" /><path d="M0 7.500l12 7.500-11 7H0zM24 7.500L12 15l11 7h1z" fill="#2ea5ea" /><path d="M0 22l12-8 12 8z" fill="#1b90df" /></svg>
          <span className="absolute left-[15px] top-[9px] flex size-[19px] items-center justify-center rounded-full border border-[#9a9a9a] bg-[#33332f] pb-px text-[11px] font-semibold leading-none tracking-[-0.5px]">16</span>
        </span>
      </Cell>
      <Running cls="bg-[#63625c]" bar="w-[49px]">
        <BraveLion size="size-[23px]" disc="size-[13px]" color="text-[#fb4a24]" />
      </Running>
      <Running>
        <svg viewBox="0 0 22 22" className="size-[22px]">
          <circle cx="11" cy="11" r="11" fill="#fff" />
          <g fill="none" strokeWidth="2.700" strokeLinecap="round"><path d="M5 9h4M9.200 5.300v0" stroke="#36c5f0" /><path d="M13 5v4M16.800 9.200v0" stroke="#2eb67d" /><path d="M13.200 13H17M12.900 16.800v0" stroke="#ecb22e" /><path d="M9 13.200V17M5.300 12.900v0" stroke="#e01e5a" /></g>
        </svg>
      </Running>
      <Running>
        <svg viewBox="0 0 24 24" className="size-[24px]"><path d="M17.500 0L24 3v18l-6.500 3z" fill="#30a3ee" /><path d="M17.500 0v6.500L3 18.500.5 16.500z" fill="#1c83d0" /><path d="M.5 7.500L3 5.500l14.500 12V24z" fill="#1479c4" /></svg>
      </Running>

      <div className="ml-auto flex h-full items-center">
        <svg viewBox="0 0 22 20" className="h-[20px] w-[22px]"><path d="M5 14.500a4.700 4.700 0 0 1-.5-9.300A6.500 6.500 0 0 1 16.500 5a4.800 4.800 0 0 1 1 9.500z" fill="#c3dbf7" /><path d="M4.500 5.200A6.500 6.500 0 0 1 16.500 5q-4 0-5 4-4-2.500-7-3.800z" fill="#f4f8fe" /><path d="M15.500 9.500q4 5 3.500 7.500a3.500 3.500 0 0 1-7-.2q0-2.500 3.500-7.300z" fill="#1e90e0" /></svg>
        <span className="ml-[9px] w-[47px] pt-[2px] text-[13px]">27°C</span>
        <svg viewBox="0 0 12 8" className="h-[8px] w-[12px]" fill="none" stroke="#fff" strokeWidth="1.300"><path d="M.5 7L6 1.500 11.500 7" /></svg>
        <svg viewBox="0 0 17 14" className="ml-[9px] mt-px h-[14px] w-[17px]"><path d="M3.500 9.500a3.200 3.200 0 0 1 0-6.300A5 5 0 0 1 12 3l2 3-1 3.500z" fill="#c4c4c4" /><circle cx="12" cy="9" r="4.500" fill="#dd2a32" /><path d="M10.200 7.200l3.600 3.600M13.800 7.200l-3.600 3.600" stroke="#fff" strokeWidth="1.200" /></svg>
        <svg viewBox="0 0 12 16" className="ml-[10px] h-[16px] w-[12px]" fill="none" stroke="#fff"><path d="M1 5h7v6.500H1zM8 7.500l3-2v5.500l-3-2M2 1.500q4-1.500 7 0M2 14.500q4 1.500 7 0" strokeWidth="1.100" /></svg>
        <svg viewBox="0 0 17 12" className="ml-[9px] h-[12px] w-[17px]" fill="none" stroke="#fff"><path d="M5.500 3.500h9.500v6.500H4.500V8M15 5.500h1.500v2.500H15M.5 2.500h5v2.500H3v3M1.500 0v2.500M4.500 0v2.500" /><path d="M7 5h6.500v3.500H7z" fill="#fff" stroke="none" /></svg>
        <svg viewBox="0 0 14 13" className="ml-[9px] h-[13px] w-[14px]" fill="none" stroke="#fff"><path d="M.7 12.500A12 12 0 0 1 13 1.500" opacity=".55" /><path d="M4 12.500a9 9 0 0 1 9-7.500M7 12.500A6 6 0 0 1 13 8.500" /><circle cx="11.500" cy="11.500" r="1.300" fill="#fff" stroke="none" /></svg>
        <svg viewBox="0 0 17 13" className="ml-[8px] h-[13px] w-[17px]" fill="none" stroke="#fff"><path d="M.5 4.500H3l4-3.500v11L3 8.500H.5z" /><path d="M9 4.500q1.500 2 0 4M11.300 2.700q3 3.800 0 7.600" /><path d="M13.700 1q4.500 5.500 0 11" opacity=".55" /></svg>
        <div className="ml-[8px] flex w-[56px] flex-col items-center text-[12px] leading-[17px] tracking-[-0.5px]">
          <span>4:27 PM</span><span>9/15/2022</span>
        </div>
        <span className="relative ml-[15px] flex w-[28px]">
          <svg viewBox="0 0 17 17" className="size-[17px]"><path d="M0 0h16.500v13H6l-3.500 3.500V13H0z" fill="#fff" /><path d="M3 3.500h10.500M3 6.500h10.500M3 9.500h5" stroke="#34342e" /></svg>
          <span className="absolute left-[5px] top-[5px] flex size-[20px] items-center justify-center rounded-full border border-[#9a9a9a] bg-[#33342f] pb-px text-[11.5px] font-semibold leading-none tracking-[-0.5px]">23</span>
        </span>
        <span className="ml-[9px] mr-[4px] h-full w-px bg-[#77766c]" />
      </div>
    </footer>
  );
}

export default function App() {
  return (
    <div className="flex h-[768px] w-[1366px] flex-col overflow-hidden bg-white font-['Open_Sans','Noto_Sans',sans-serif]">
      <TabBar />
      <AddressBar />
      <Bookmarks />
      <AzureHeader />
      <Heading />
      <div className="flex min-h-0 flex-1">
        <SideMenu />
        <Blade />
      </div>
      <Taskbar />
    </div>
  );
}
